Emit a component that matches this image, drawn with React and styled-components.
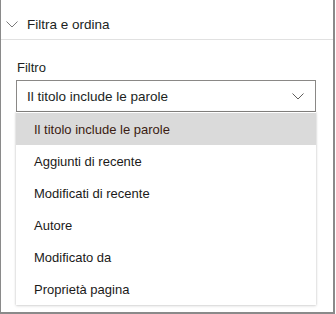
import React from "react";
import styled, { createGlobalStyle } from "styled-components";

const GlobalStyle = createGlobalStyle`
  html, body {
    margin: 0;
    padding: 0;
    background: #fff;
  }
  body {
    font-family: "Liberation Sans", Arial, sans-serif;
    color: #201f1e;
  }
`;

const Panel = styled.div`
  box-sizing: border-box;
  width: 335px;
  height: 314px;
  border-left: 1px solid #8a8a8a;
  border-right: 2px solid #8a8a8a;
  border-bottom: 2px solid #8a8a8a;
  display: flex;
  flex-direction: column;
`;

const Header = styled.div`
  box-sizing: border-box;
  height: 40px;
  padding: 10px 0 0 5px;
  display: flex;
  align-items: center;
  gap: 9px;
  border-bottom: 1px solid #e1e1e1;
  font-size: 13.5px;
`;

const Body = styled.div`
  padding: 18px 17px 0 15px;
`;

const Label = styled.div`
  font-size: 13px;
  height: 19px;
  line-height: 19px;
  margin-bottom: 3px;
  padding-left: 1px;
`;

const Select = styled.div`
  box-sizing: border-box;
  height: 32px;
  border: 1px solid #8a8886;
  display: flex;
  align-items: center;
  justify-content: space-between;
  padding: 0 11px 0 10px;
  font-size: 13.5px;
`;

const Menu = styled.ul`
  list-style: none;
  margin: 0;
  padding: 1px 0 0;
  background: #fff;
  box-shadow: 0 0 2px rgba(0, 0, 0, 0.18), 0 1px 3px rgba(0, 0, 0, 0.12);
`;

const Item = styled.li`
  height: 32px;
  padding-top: 1px;
  box-sizing: border-box;
  display: flex;
  align-items: center;
  padding-left: 18px;
  font-size: 13px;
  background: ${(p) => (p.$selected ? "#dadada" : "transparent")};
  color: ${(p) => (p.$selected ? "#3a1c12" : "#1b1a19")};
`;

const Chevron = ({ width = 12, color = "#605e5c" }) => (
  <svg width={width} height={width / 2 + 1} viewBox="0 0 12 7" fill="none">
    <path d="M0.5 0.5 L6 6 L11.5 0.5" stroke={color} strokeWidth="1" />
  </svg>
);

const options = [
  "Il titolo include le parole",
  "Aggiunti di recente",
  "Modificati di recente",
  "Autore",
  "Modificato da",
  "Proprietà pagina",
];

export default function App() {
  return (
    <>
      <GlobalStyle />
      <Panel>
        <Header>
          <Chevron width={12} color="#7a7a7a" />
          <span>Filtra e ordina</span>
        </Header>
        <Body>
          <Label>Filtro</Label>
          <Select>
            <span>{options[0]}</span>
            <Chevron width={12} />
          </Select>
          <Menu>
            {options.map((o, i) => (
              <Item key={o} $selected={i === 0}>
                {o}
              </Item>
            ))}
          </Menu>
        </Body>
      </Panel>
    </>
  );
}
